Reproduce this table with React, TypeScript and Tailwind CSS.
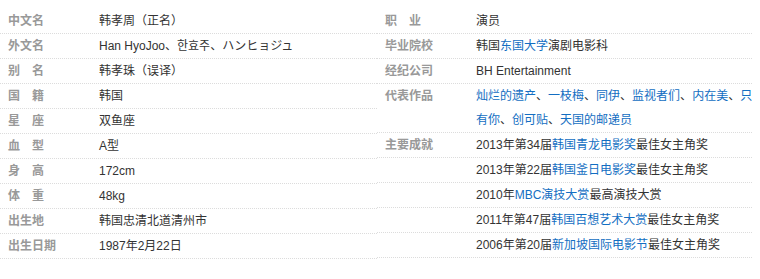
import React from "react";

type Part = string | { link: string };
type Row = { label?: string; spread?: boolean; lines: Part[][] };

const leftRows: Row[] = [
  { label: "中文名", lines: [["韩孝周（正名）"]] },
  { label: "外文名", lines: [["Han HyoJoo、한효주、ハンヒョジュ"]] },
  { label: "别名", spread: true, lines: [["韩孝珠（误译）"]] },
  { label: "国籍", spread: true, lines: [["韩国"]] },
  { label: "星座", spread: true, lines: [["双鱼座"]] },
  { label: "血型", spread: true, lines: [["A型"]] },
  { label: "身高", spread: true, lines: [["172cm"]] },
  { label: "体重", spread: true, lines: [["48kg"]] },
  { label: "出生地", lines: [["韩国忠清北道清州市"]] },
  { label: "出生日期", lines: [["1987年2月22日"]] },
];

const rightRows: Row[] = [
  { label: "职业", spread: true, lines: [["演员"]] },
  { label: "毕业院校", lines: [["韩国", { link: "东国大学" }, "演剧电影科"]] },
  { label: "经纪公司", lines: [["BH Entertainment"]] },
  {
    label: "代表作品",
    lines: [
      [{ link: "灿烂的遗产" }, "、", { link: "一枝梅" }, "、", { link: "同伊" }, "、", { link: "监视者们" }, "、", { link: "内在美" }, "、", { link: "只" }],
      [{ link: "有你" }, "、", { link: "创可贴" }, "、", { link: "天国的邮递员" }],
    ],
  },
  { label: "主要成就", lines: [["2013年第34届", { link: "韩国青龙电影奖" }, "最佳女主角奖"]] },
  { lines: [["2013年第22届", { link: "韩国釜日电影奖" }, "最佳女主角奖"]] },
  { lines: [["2010年", { link: "MBC演技大赏" }, "最高演技大赏"]] },
  { lines: [["2011年第47届", { link: "韩国百想艺术大赏" }, "最佳女主角奖"]] },
  { lines: [["2006年第20届", { link: "新加坡国际电影节" }, "最佳女主角奖"]] },
];

const Label = ({ row }: { row: Row }) => (
  <dt className="w-[99px] shrink-0 pl-[8px] font-bold text-[#999]">
    {row.label && row.spread ? (
      <span className="flex w-[36px] justify-between">
        {row.label.split("").map((c, i) => (
          <span key={i}>{c}</span>
        ))}
      </span>
    ) : (
      row.label
    )}
  </dt>
);

const InfoBlock = ({ rows, width }: { rows: Row[]; width: string }) => (
  <dl className={`${width} shrink-0`}>
    {rows.map((row, i) => (
      <div key={i} className="flex border-b border-dotted border-[#dcdcdc] leading-[24px]">
        <Label row={row} />
        <dd className="flex-1 text-[#333]">
          {row.lines.map((line, j) => (
            <div key={j} className="whitespace-nowrap">
              {line.map((p, k) =>
                typeof p === "string" ? (
                  <span key={k}>{p}</span>
                ) : (
                  <a key={k} href="#" className="text-[#136ec2]">
                    {p.link}
                  </a>
                )
              )}
            </div>
          ))}
        </dd>
      </div>
    ))}
  </dl>
);

export default function App() {
  return (
    <div
      className="flex min-h-[279px] w-[760px] items-start bg-white pt-[9px] text-[12px]"
      style={{ fontFamily: '"Liberation Sans", "Noto Sans CJK SC", sans-serif' }}
    >
      <InfoBlock rows={leftRows} width="w-[377px]" />
      <InfoBlock rows={rightRows} width="w-[375px]" />
    </div>
  );
}
